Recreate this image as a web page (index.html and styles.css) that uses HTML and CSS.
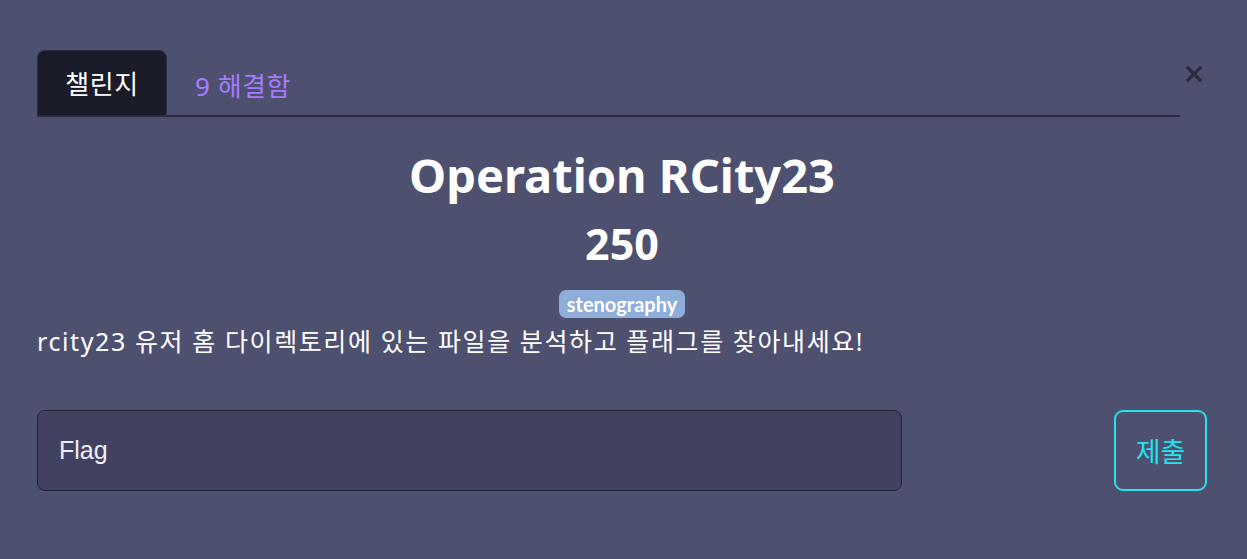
FILE: index.html
```html
<!DOCTYPE html>
<html lang="ko">
  <head>
    <meta charset="UTF-8" />
    <meta name="viewport" content="width=device-width, initial-scale=1.0" />
    <title>Challenge</title>
    <link rel="stylesheet" href="styles.css">
  </head>
  <body>
    <!-- Challenge modal -->
    <div class="modal">
      <div class="modal-head">
        <div class="tabs">
          <div class="tab active">챌린지</div>
          <div class="tab solves">9 해결함</div>
        </div>
        <button class="close" aria-label="close">
          <svg width="18" height="18" viewBox="0 0 18 18">
            <path d="M3 3 L15 15 M15 3 L3 15" stroke="#2b2c40" stroke-width="3.2" stroke-linecap="square" />
          </svg>
        </button>
      </div>

      <h1 class="title">Operation RCity23</h1>
      <h2 class="points">250</h2>
      <div class="tags">
        <span class="tag">stenography</span>
      </div>
      <p class="desc">rcity23 유저 홈 다이렉토리에 있는 파일을 분석하고 플래그를 찾아내세요!</p>

      <!-- Flag submit form -->
      <form class="submit-row" autocomplete="off">
        <input type="text" class="flag-input" placeholder="Flag" />
        <button type="submit" class="submit-btn">제출</button>
      </form>
    </div>
  </body>
</html>
```

FILE: styles.css
```css
body {
  background: #4e5070;
  font-family: "Noto Sans", "Noto Sans CJK KR", sans-serif;
  color: #fff;
  margin: 0;
}
.modal {
  padding: 50px 40px 0 37px;
}
.modal-head {
  display: flex;
  align-items: flex-start;
}
.tabs {
  flex: 1;
  display: flex;
  border-bottom: 2px solid #2a2b3f;
  height: 65px;
}
.tab {
  font-size: 26px;
  height: 65px;
  box-sizing: border-box;
  display: flex;
  align-items: center;
  letter-spacing: 0.5px;
}
.tab.active {
  background: #1b1c29;
  border: 1px solid #2e2f44;
  border-bottom: none;
  border-radius: 8px 8px 0 0;
  width: 130px;
  justify-content: center;
}
.tab.solves {
  color: #a57bff;
  padding-left: 28px;
  padding-top: 4px;
}
.close {
  background: none;
  border: none;
  padding: 0;
  margin-top: 15px;
  width: 27px;
  display: flex;
  justify-content: center;
  cursor: pointer;
}
.title {
  text-align: center;
  font-size: 47px;
  font-weight: 700;
  margin: 18px 0 0;
  line-height: 80px;
}
.points {
  text-align: center;
  font-size: 43px;
  font-weight: 700;
  margin: 0;
  line-height: 58px;
}
.tags {
  text-align: center;
  margin-top: 17px;
  line-height: 20px;
}
.tag {
  display: inline-block;
  background: #8eadd9;
  border-radius: 7px;
  font-family: Lato, sans-serif;
  font-weight: 700;
  font-size: 20px;
  padding: 4px 8px;
  line-height: 20px;
}
.desc {
  font-size: 25px;
  letter-spacing: 1.6px;
  margin: 7px 0 0;
  line-height: 32px;
}
.submit-row {
  display: flex;
  justify-content: space-between;
  margin-top: 53px;
}
.flag-input {
  width: 865px;
  height: 81px;
  box-sizing: border-box;
  background: #424260;
  border: 1px solid #23243a;
  border-radius: 8px;
  color: #fff;
  font-family: "Liberation Sans", Arial, sans-serif;
  font-size: 25px;
  padding: 0 21px;
}
.flag-input::placeholder {
  color: #eeeefa;
}
.submit-btn {
  width: 93px;
  height: 81px;
  background: none;
  border: 2px solid #22e3ef;
  border-radius: 9px;
  color: #22e3ef;
  font-family: "Noto Sans CJK KR", sans-serif;
  font-size: 27px;
  cursor: pointer;
}
```
